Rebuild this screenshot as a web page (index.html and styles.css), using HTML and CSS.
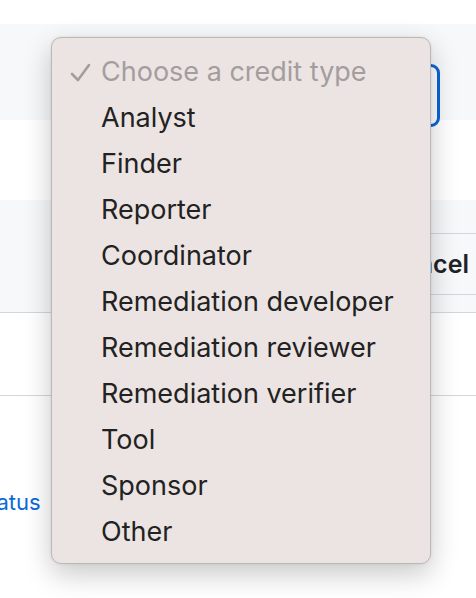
FILE: index.html
```html
<!DOCTYPE html>
<html>
<head>
<meta charset="utf-8">
<link rel="stylesheet" href="styles.css">
</head>
<body>
<div class="page">
  <div class="top-gap"></div>
  <div class="band">
    <div class="select-box"></div>
  </div>
  <div class="white-gap"></div>
  <div class="form-row">
    <div class="btn">Cancel</div>
  </div>
  <div class="row-2"></div>
  <div class="row-3">
    <a class="link">Status</a>
  </div>
</div>
<div class="menu">
  <div class="item placeholder">
    <svg class="check" width="22" height="22" viewBox="0 0 22 22"><path d="M2 12 L8 18 L19 3" fill="none" stroke="#a39e9d" stroke-width="2.6" stroke-linecap="round" stroke-linejoin="round"/></svg>
    <span>Choose a credit type</span>
  </div>
  <div class="item">Analyst</div>
  <div class="item">Finder</div>
  <div class="item">Reporter</div>
  <div class="item">Coordinator</div>
  <div class="item">Remediation developer</div>
  <div class="item">Remediation reviewer</div>
  <div class="item">Remediation verifier</div>
  <div class="item">Tool</div>
  <div class="item">Sponsor</div>
  <div class="item">Other</div>
</div>
</body>
</html>
```

FILE: styles.css
```css
html, body {
  margin: 0;
  padding: 0;
  background: #ffffff;
  width: 476px;
  height: 598px;
  overflow: hidden;
  font-family: Inter, "Liberation Sans", sans-serif;
}
.page {
  display: flex;
  flex-direction: column;
}
.top-gap { height: 24px; }
.band {
  height: 96px;
  background: #f6f8fa;
  display: flex;
  align-items: flex-start;
  justify-content: flex-end;
  padding-right: 36px;
  box-sizing: border-box;
  padding-top: 40px;
}
.select-box {
  width: 380px;
  height: 63px;
  box-sizing: border-box;
  border: 3px solid #0b64d8;
  border-radius: 9px;
  background: #ffffff;
}
.white-gap { height: 80px; }
.form-row {
  height: 113px;
  background: #f6f8fa;
  border-bottom: 1px solid #d0d7de;
  box-sizing: border-box;
  display: flex;
  justify-content: flex-end;
  padding-top: 33px;
}
.btn {
  height: 62px;
  box-sizing: border-box;
  border: 1px solid #d0d7de;
  border-radius: 8px;
  background: #f6f8fa;
  font-size: 25px;
  font-weight: 600;
  color: #1f2328;
  display: flex;
  align-items: center;
  padding: 0 20px 0 20px;
  margin-right: -14px;
  flex-shrink: 0;
}
.row-2 {
  height: 82px;
  border-bottom: 1px solid #d0d7de;
}
.row-3 {
  height: 180px;
  padding-top: 93px;
  box-sizing: border-box;
  margin-left: -25px;
}
.link {
  color: #0969da;
  font-size: 22px;
}
.menu {
  position: absolute;
  left: 51px;
  top: 37px;
  width: 380px;
  height: 527px;
  box-sizing: border-box;
  background: #ece4e3;
  border: 1px solid #bcb8b7;
  border-radius: 10px;
  box-shadow: 0 10px 28px rgba(0, 0, 0, 0.22), 0 0 3px rgba(0,0,0,0.08);
  padding: 11px 0 0 49px;
  display: flex;
  flex-direction: column;
}
.item {
  height: 46px;
  line-height: 46px;
  font-size: 27px;
  color: #222222;
  white-space: nowrap;
  position: relative;
}
.placeholder {
  color: #a39e9d;
}
.check {
  position: absolute;
  left: -31px;
  top: 13px;
}
```
